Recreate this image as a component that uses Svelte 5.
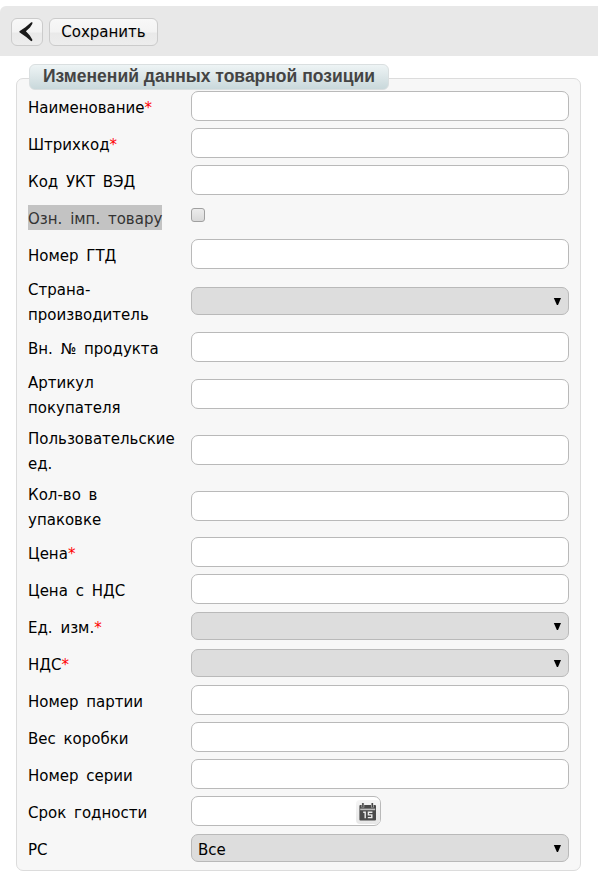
<script>
  const rows = [
    { lines: ['Наименование'], required: true },
    { lines: ['Штрихкод'], required: true },
    { lines: ['Код УКТ ВЭД'] },
    { lines: ['Озн. імп. товару'], type: 'checkbox', selected: true },
    { lines: ['Номер ГТД'] },
    { lines: ['Страна-', 'производитель'], type: 'select' },
    { lines: ['Вн. № продукта'] },
    { lines: ['Артикул', 'покупателя'] },
    { lines: ['Пользовательские', 'ед.'] },
    { lines: ['Кол-во в', 'упаковке'] },
    { lines: ['Цена'], required: true },
    { lines: ['Цена с НДС'] },
    { lines: ['Ед. изм.'], type: 'select', required: true },
    { lines: ['НДС'], type: 'select', required: true },
    { lines: ['Номер партии'] },
    { lines: ['Вес коробки'] },
    { lines: ['Номер серии'] },
    { lines: ['Срок годности'], type: 'date' },
    { lines: ['РС'], type: 'select', value: 'Все' }
  ];
</script>

<main>
  <header>
    <button class="back" aria-label="Назад">
      <svg width="16" height="20" viewBox="0 0 16 20">
        <path d="M12 .4 13.3 .1 13.4 1.8 11 5.6 6.9 9.3 10.8 13.5 13.4 17.8 13 19.2 11.6 18.8 7.2 15 .4 10.2V9.3L6.4 5.2Z" fill="#1a1a1a" />
      </svg>
    </button>
    <button class="save">Сохранить</button>
  </header>

  <section>
    <h1>Изменений данных товарной позиции</h1>
    {#each rows as row}
      <div class="row" class:tall={row.lines.length > 1}>
        <div class="label">
          {#each row.lines as line, i}
            <div><span class:selected={row.selected}>{line}</span>{#if row.required && i === row.lines.length - 1}<i>*</i>{/if}</div>
          {/each}
        </div>
        {#if row.type === 'select'}
          <div class="select">
            <span>{row.value ?? ''}</span>
            <svg width="8" height="7" viewBox="0 0 8 7"><path d="M.8 0H8L5 7H3.9Z" /></svg>
          </div>
        {:else if row.type === 'checkbox'}
          <div class="check"></div>
        {:else if row.type === 'date'}
          <div class="date">
            <input type="text" aria-label={row.lines[0]} />
            <span class="calendar">
              <svg width="18" height="18" viewBox="0 0 18 18">
                <rect x=".4" y="2" width="16.6" height="15.4" rx="1" fill="#4a4a4a" />
                <path d="M1.2 6.4H16.2" stroke="#bdbdbd" stroke-width="1.6" />
                <path d="M3.9 0V4.5M13.3 0V4.5" stroke="#d8d8d8" stroke-width="2.6" />
                <path d="M3.9 0V4.4M13.3 0V4.4" stroke="#444" stroke-width="1.5" />
                <path d="M4.2 9.3H6.2V15.2M13.4 9.3H9.4V11.9H12.8V14.6H8.8" fill="none" stroke="#ececec" stroke-width="1.4" />
              </svg>
            </span>
          </div>
        {:else}
          <input class="text" type="text" aria-label={row.lines.join(' ')} />
        {/if}
      </div>
    {/each}
  </section>
</main>

<style>
  :global(body) { background: #fff; }
  * { box-sizing: border-box; }
  main {
    height: 875px;
    padding-top: 6px;
    overflow: hidden;
    color: #000;
    font: 15px/25px "DejaVu Sans", sans-serif;
  }
  header {
    display: flex;
    gap: 6px;
    height: 50px;
    padding: 12px 11px;
    background: #e8e8e8;
    border-radius: 6px 0 0 0;
  }
  button {
    display: flex;
    align-items: center;
    justify-content: center;
    height: 28px;
    padding: 0;
    border: 1px solid #cbcbcb;
    border-radius: 6px;
    background: linear-gradient(#f8f8f8, #f3f3f3 50%, #e9e9e9 54%, #ededed);
    color: #000;
    font: inherit;
    text-shadow: 1px 1px 1px #ddd;
  }
  .back { width: 32px; }
  .save { width: 109px; }
  section {
    width: 565px;
    height: 793px;
    margin: 22px 0 0 16px;
    padding: 0 11px;
    border: 1px solid #dcdcdc;
    border-radius: 7px;
    background: #f7f7f7;
  }
  h1 {
    width: 360px;
    height: 26px;
    margin: -15px 0 -2px 1px;
    border: 1px solid #dadfe0;
    border-radius: 6px;
    background: linear-gradient(#eef4f5, #c9d8db);
    color: #444;
    font: bold 17.5px/23px "Liberation Sans", sans-serif;
    text-align: center;
    white-space: nowrap;
  }
  .row {
    display: flex;
    align-items: center;
    height: 37px;
  }
  .row.tall { height: 56px; }
  .label {
    width: 163px;
    flex: none;
    word-spacing: 3px;
    white-space: nowrap;
  }
  .label div { height: 25px; line-height: 29px; }
  .label span { display: inline-block; height: 25px; vertical-align: top; }
  .label i { color: #f00; font-style: normal; }
  .label .selected { background: #c3c3c3; color: #333; }
  input {
    display: block;
    width: 378px;
    height: 30px;
    margin: 0 0 1px;
    padding: 0 6px;
    border: 1px solid #b9b9b9;
    border-radius: 7px;
    outline: 0;
    background: #fff;
    font: inherit;
  }
  .tall input { margin-bottom: 0; }
  .select {
    display: flex;
    align-items: center;
    justify-content: space-between;
    width: 378px;
    height: 28px;
    margin-bottom: 1px;
    padding: 0 7px 0 6px;
    border: 1px solid #b9b9b9;
    border-radius: 7px;
    background: #ddd;
  }
  .row:not(.tall) .select { align-self: flex-start; margin-top: 4px; }
  .tall .select { margin-bottom: 0; }
  .select span { padding-top: 5px; }
  .select svg { margin-top: 1px; }
  .check {
    width: 14px;
    height: 14px;
    margin-bottom: 5px;
    border: 1px solid #a0a0a0;
    border-radius: 3px;
    background: linear-gradient(#ececec, #d9d9d9);
  }
  .date { display: grid; align-items: center; width: 190px; }
  .date input, .calendar { grid-area: 1 / 1; }
  .date input { width: 190px; }
  .calendar {
    display: flex;
    align-items: center;
    justify-content: center;
    justify-self: end;
    width: 24px;
    height: 24px;
    margin-right: 1px;
    border-radius: 4px;
    background: linear-gradient(#f5f5f5, #e7e7e7);
  }
</style>
